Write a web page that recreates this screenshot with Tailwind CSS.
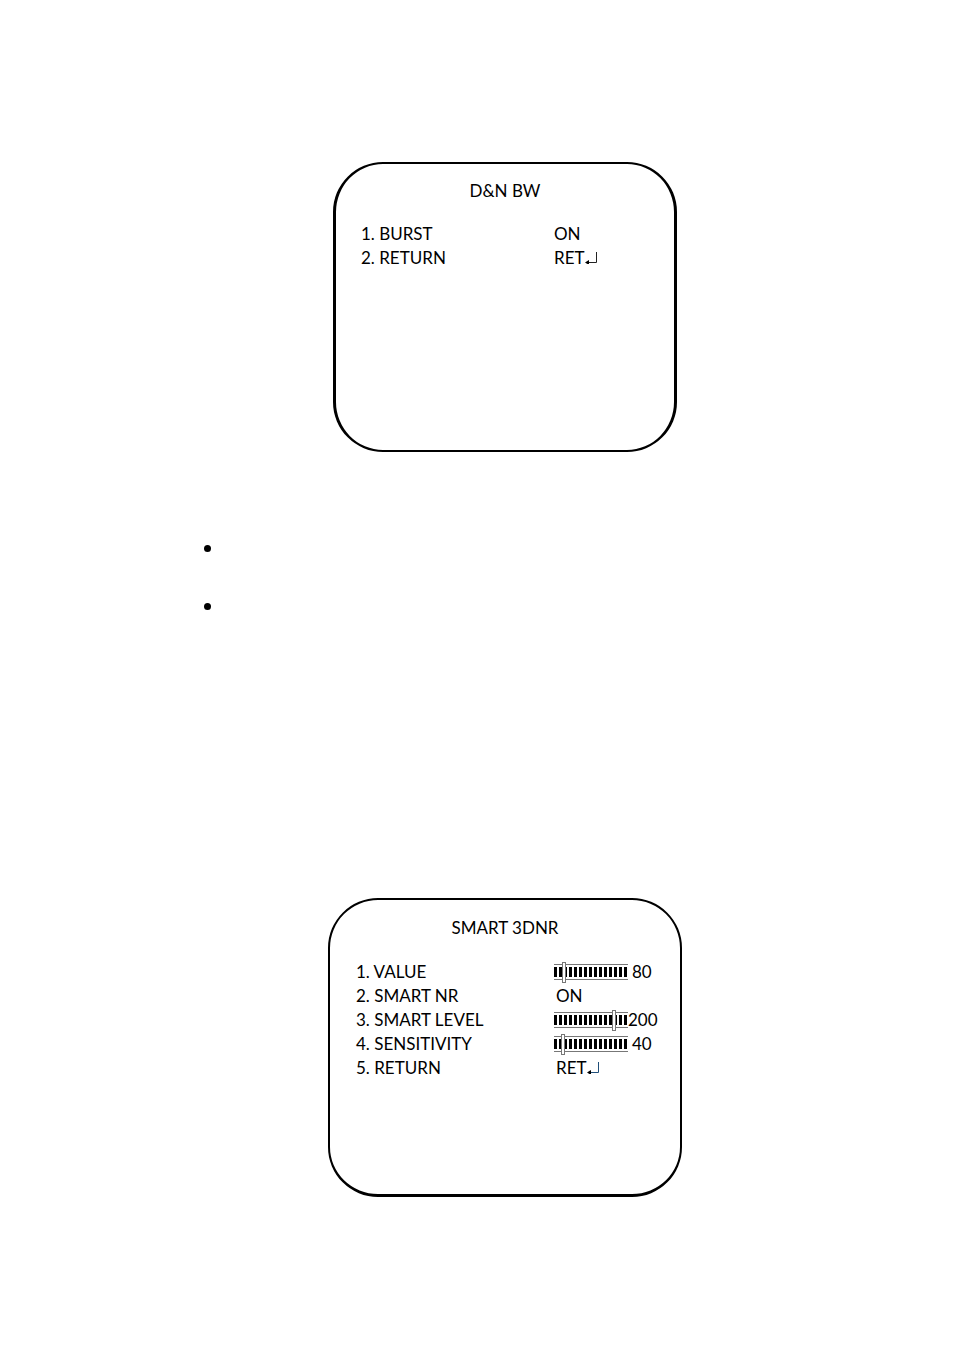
<!DOCTYPE html>
<html lang="en">
<head>
  <meta charset="UTF-8">
  <meta name="viewport" content="width=device-width, initial-scale=1.0">
  <title>D&amp;N BW / SMART 3DNR</title>
  <script src="https://cdn.jsdelivr.net/npm/@tailwindcss/browser@4"></script>
</head>
<body class="bg-white text-black font-['Lato',sans-serif] text-[17px] leading-6">
  <main class="min-h-screen pt-[162px] pb-38 pl-14">

    <!-- D&N BW menu -->
    <section class="mx-auto w-full max-w-[344px] min-h-[290px] rounded-[50px] border-[2px] border-x-[3px] border-black px-[25px] pt-[15px]">
      <h2 class="text-center">D&amp;N BW</h2>
      <dl class="mt-[19px] grid grid-cols-[193px_1fr]">
        <dt>1. BURST</dt>
        <dd>ON</dd>
        <dt>2. RETURN</dt>
        <dd class="flex items-center">RET
          <svg width="13" height="12" viewBox="0 0 13 12" role="img" aria-label="Enter"><path d="M11.5 0V10.5H3" fill="none" stroke="#222"/><path d="M0 10.5L4 8V13Z"/></svg>
        </dd>
      </dl>
    </section>

    <ul class="mt-[93px] ml-[148px] flex flex-col gap-[51px]">
      <li class="size-[7px] rounded-full bg-black"></li>
      <li class="size-[7px] rounded-full bg-black"></li>
    </ul>

    <!-- SMART 3DNR menu -->
    <section class="mx-auto mt-[288px] w-full max-w-[354px] min-h-[299px] rounded-[50px] border-[2px] border-b-[3px] border-black px-[26px] pt-[16px]">
      <h2 class="text-center">SMART 3DNR</h2>
      <dl class="mt-5 grid grid-cols-[198px_1fr]">
        <dt><label for="value">1. VALUE</label></dt>
        <dd class="flex items-center gap-1">
          <input type="range" id="value" min="0" max="100" value="12" class="h-4 w-[74px] shrink-0 appearance-none border-y border-[#777] py-0.5 bg-clip-content bg-[repeating-linear-gradient(90deg,#000_0_3px,#fff_3px_5px)] [&::-webkit-slider-thumb]:h-[21px] [&::-webkit-slider-thumb]:w-1 [&::-webkit-slider-thumb]:appearance-none [&::-webkit-slider-thumb]:border [&::-webkit-slider-thumb]:border-[#777] [&::-webkit-slider-thumb]:bg-white">
          <output for="value">80</output>
        </dd>
        <dt>2. SMART NR</dt>
        <dd class="pl-0.5">ON</dd>
        <dt><label for="level">3. SMART LEVEL</label></dt>
        <dd class="flex items-center">
          <input type="range" id="level" min="0" max="100" value="83" class="h-4 w-[74px] shrink-0 appearance-none border-y border-[#777] py-0.5 bg-clip-content bg-[repeating-linear-gradient(90deg,#000_0_3px,#fff_3px_5px)] [&::-webkit-slider-thumb]:h-[21px] [&::-webkit-slider-thumb]:w-1 [&::-webkit-slider-thumb]:appearance-none [&::-webkit-slider-thumb]:border [&::-webkit-slider-thumb]:border-[#777] [&::-webkit-slider-thumb]:bg-white">
          <output for="level">200</output>
        </dd>
        <dt><label for="sensitivity">4. SENSITIVITY</label></dt>
        <dd class="flex items-center gap-1">
          <input type="range" id="sensitivity" min="0" max="100" value="10" class="h-4 w-[74px] shrink-0 appearance-none border-y border-[#777] py-0.5 bg-clip-content bg-[repeating-linear-gradient(90deg,#000_0_3px,#fff_3px_5px)] [&::-webkit-slider-thumb]:h-[21px] [&::-webkit-slider-thumb]:w-1 [&::-webkit-slider-thumb]:appearance-none [&::-webkit-slider-thumb]:border [&::-webkit-slider-thumb]:border-[#777] [&::-webkit-slider-thumb]:bg-white">
          <output for="sensitivity">40</output>
        </dd>
        <dt>5. RETURN</dt>
        <dd class="flex items-center pl-0.5">RET
          <svg width="13" height="12" viewBox="0 0 13 12" role="img" aria-label="Enter"><path d="M11.5 0V10.5H3" fill="none" stroke="#1f4e79"/><path d="M0 10.5L4 8V13Z"/></svg>
        </dd>
      </dl>
    </section>

  </main>
</body>
</html>
